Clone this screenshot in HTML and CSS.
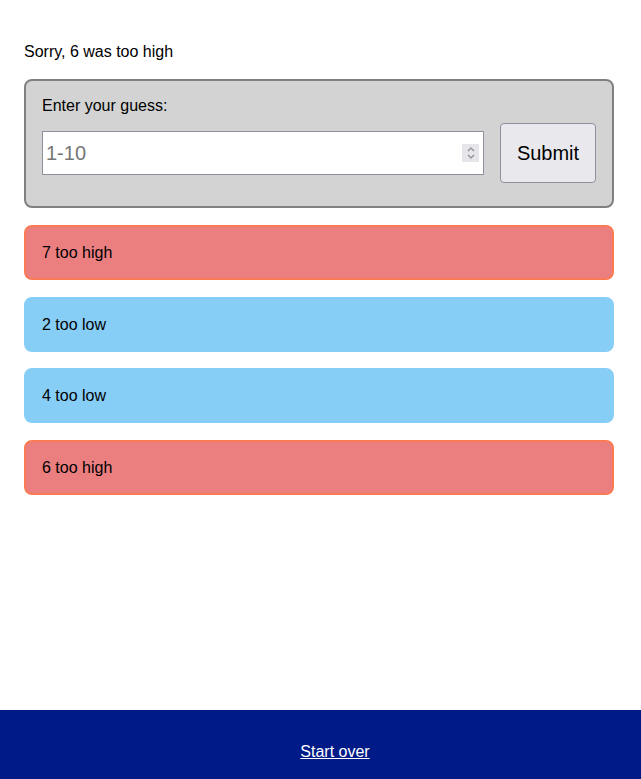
FILE: index.html
```html
<!DOCTYPE html>
<html lang="en">
<head>
    <meta charset="UTF-8">
    <meta name="viewport" content="width=device-width, initial-scale=1.0">
    <title>Guess the number</title>
    <link rel="stylesheet" href="styles.css">
</head>
<body>
    <main id="game">
        <p class="status">Sorry, 6 was too high</p>

        <form class="guess-form">
            <label for="guess">Enter your guess:</label>
            <div class="guess-row">
                <div class="number-field">
                    <input type="text" id="guess" placeholder="1-10">
                    <span class="spinner">
                        <svg width="10" height="14" viewBox="0 0 10 14">
                            <path d="M2 5 L5 2 L8 5" fill="none" stroke="#8a8a90" stroke-width="1.2"/>
                            <path d="M2 9 L5 12 L8 9" fill="none" stroke="#8a8a90" stroke-width="1.2"/>
                        </svg>
                    </span>
                </div>
                <button type="button" class="submit-btn">Submit</button>
            </div>
        </form>

        <ul class="guesses">
            <li class="guess high">7 too high</li>
            <li class="guess low">2 too low</li>
            <li class="guess low">4 too low</li>
            <li class="guess high">6 too high</li>
        </ul>
    </main>

    <footer>
        <a href="#">Start over</a>
    </footer>
</body>
</html>
```

FILE: styles.css
```css
body {
    font-family: 'Liberation Sans', Arial, sans-serif;
    font-size: 16px;
    color: #000;
    margin: 0;
    padding: 0;
}

#game {
    min-height: 710px;
    box-sizing: border-box;
    padding: 43px 27px 0 24px;
}

.status {
    margin: 0 0 18px;
    line-height: 18px;
}

.guess-form {
    background-color: #d3d3d3;
    border: 2px solid #808080;
    border-radius: 8px;
    padding: 16px 16px 23px;
    display: flex;
    flex-direction: column;
    gap: 8px;
}

.guess-form label {
    line-height: 18px;
}

.guess-row {
    display: flex;
    align-items: center;
    gap: 16px;
}

.number-field {
    flex: 1;
    height: 44px;
    box-sizing: border-box;
    background-color: #fff;
    border: 1px solid #8f8f9d;
    display: flex;
    align-items: center;
    padding: 0 3px 0 3px;
}

.number-field input {
    flex: 1;
    min-width: 0;
    border: none;
    outline: none;
    font-family: inherit;
    font-size: 20px;
    padding: 0;
    background: transparent;
}

.number-field input::placeholder {
    color: #767676;
}

.spinner {
    width: 17px;
    height: 18px;
    background-color: #e6e6ea;
    display: flex;
    align-items: center;
    justify-content: center;
    margin-right: 1px;
}

.submit-btn {
    width: 96px;
    height: 60px;
    font-family: inherit;
    font-size: 20px;
    background-color: #e9e9ed;
    border: 1px solid #8f8f9d;
    border-radius: 4px;
    color: #000;
}

.guesses {
    list-style: none;
    margin: 17px 0 0;
    padding: 0;
    display: flex;
    flex-direction: column;
    gap: 16.6px;
}

.guess {
    border: 2px solid;
    border-radius: 8px;
    padding: 16px;
    line-height: 19px;
}

.guess.high {
    background-color: #eb7f80;
    border-color: #f97a53;
}

.guess.low {
    background-color: #87cef7;
    border-color: #87cef7;
}

footer {
    background-color: #001a87;
    padding: 33px 0 31px 29px;
    text-align: center;
    line-height: 18px;
}

footer a {
    color: #fff;
}
```
